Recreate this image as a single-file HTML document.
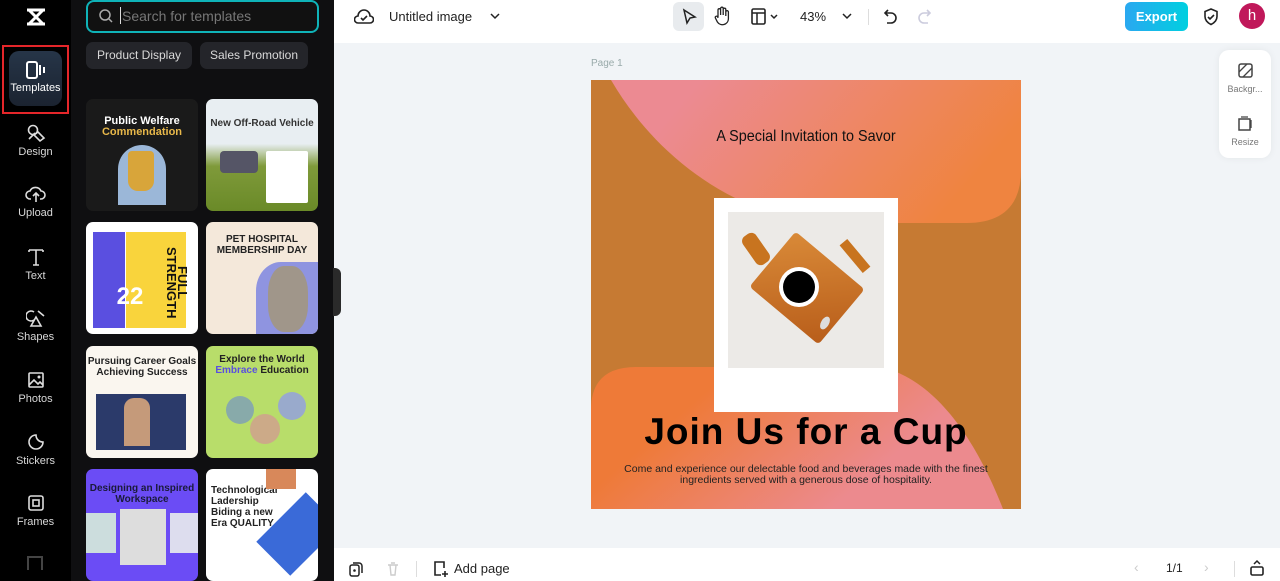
<!DOCTYPE html>
<html><head><meta charset="utf-8"><style>
*{margin:0;padding:0;box-sizing:border-box}
html,body{width:1280px;height:581px;overflow:hidden}
body{font-family:"Liberation Sans",sans-serif;background:#f1f4f7;position:relative}
.abs{position:absolute}
.rail{left:0;top:0;width:71px;height:581px;background:#000;overflow:hidden}
.ri{position:absolute;left:0;width:71px;text-align:center;color:#d8d8d8;font-size:11px}
.ri svg{display:block;margin:0 auto 3px}
.panel{left:71px;top:0;width:263px;height:581px;background:#0f0f11;overflow:hidden}
.chip{position:absolute;top:42px;height:27px;border-radius:7px;background:#24252a;color:#d9d9d9;font-size:12px;line-height:27px;text-align:center}
.th{position:absolute;width:112px;height:112px;border-radius:7px;overflow:hidden}
.th b{position:absolute;font-size:10px;text-align:center;width:100%;line-height:11px}
.top{left:334px;top:0;width:946px;height:43px;background:#fff}
.bot{left:334px;top:548px;width:946px;height:33px;background:#fff;overflow:hidden}
</style></head><body>
<div class="abs rail">
 <svg class="abs" style="left:25px;top:7px" width="22" height="20" viewBox="0 0 22 20"><path d="M2 3h18M2 17h18M4 3l14 14M18 3L4 17" stroke="#fff" stroke-width="3" fill="none"/></svg>
 <div class="abs" style="left:2px;top:45px;width:67px;height:69px;border:2px solid #e5262a"></div>
 <div class="abs" style="left:9px;top:51px;width:53px;height:55px;border-radius:10px;background:linear-gradient(#263548,#1b2330)"></div>
 <div class="ri" style="top:61px;color:#fff">
  <svg width="22" height="18" viewBox="0 0 22 18"><rect x="2" y="1" width="10" height="16" rx="2" stroke="#fff" stroke-width="2" fill="none"/><path d="M15 4v10M19 6v6" stroke="#fff" stroke-width="2"/></svg>Templates</div>
 <div class="ri" style="top:123px"><svg width="20" height="20" viewBox="0 0 20 20"><circle cx="7" cy="7" r="4.5" stroke="#ddd" stroke-width="1.6" fill="none"/><path d="M12 9l6 6-4 3-6-6zM3 16l6-6" stroke="#ddd" stroke-width="1.6" fill="none"/></svg>Design</div>
 <div class="ri" style="top:184px"><svg width="22" height="20" viewBox="0 0 22 20"><path d="M6 15H5a4 4 0 010-8 6 6 0 0111 0 4 4 0 010 8h-1M11 18V9M8 12l3-3 3 3" stroke="#ddd" stroke-width="1.6" fill="none"/></svg>Upload</div>
 <div class="ri" style="top:247px"><svg width="20" height="20" viewBox="0 0 20 20"><path d="M3 3h14M10 3v15M3 3v2M17 3v2M7 18h6" stroke="#ddd" stroke-width="1.6" fill="none"/></svg>Text</div>
 <div class="ri" style="top:308px"><svg width="20" height="20" viewBox="0 0 20 20"><path d="M8 4a5 5 0 100 8M10 9l5 9H5z M12 3l6 5" stroke="#ddd" stroke-width="1.6" fill="none"/></svg>Shapes</div>
 <div class="ri" style="top:370px"><svg width="20" height="20" viewBox="0 0 20 20"><rect x="3" y="3" width="14" height="14" rx="1" stroke="#ddd" stroke-width="1.6" fill="none"/><path d="M3 15l5-5 4 4 2-2 3 3" stroke="#ddd" stroke-width="1.6" fill="none"/><circle cx="13" cy="7" r="1.5" fill="#ddd"/></svg>Photos</div>
 <div class="ri" style="top:432px"><svg width="20" height="20" viewBox="0 0 20 20"><path d="M17 10a7 7 0 11-7-7c0 4 3 7 7 7z" stroke="#ddd" stroke-width="1.6" fill="none"/></svg>Stickers</div>
 <div class="ri" style="top:493px"><svg width="20" height="20" viewBox="0 0 20 20"><rect x="3" y="3" width="14" height="14" rx="2" stroke="#ddd" stroke-width="1.6" fill="none"/><rect x="7" y="7" width="6" height="6" stroke="#ddd" stroke-width="1.6" fill="none"/></svg>Frames</div>
 <div class="abs" style="left:27px;top:556px;width:16px;height:14px;border:2px solid #444;border-bottom:none"></div>
</div>
<div class="abs panel">
 <div class="abs" style="left:15px;top:0;width:233px;height:33px;border:2px solid #0fb3b8;border-radius:8px;background:#111"></div>
 <svg class="abs" style="left:27px;top:8px" width="16" height="16" viewBox="0 0 16 16"><circle cx="7" cy="7" r="5" stroke="#aaa" stroke-width="1.5" fill="none"/><path d="M11 11l3 3" stroke="#aaa" stroke-width="1.5"/></svg>
 <div class="abs" style="left:49px;top:7px;width:1px;height:17px;background:#ddd"></div>
 <div class="abs" style="left:51px;top:8px;color:#777;font-size:14px">Search for templates</div>
 <div class="chip" style="left:15px;width:106px">Product Display</div>
 <div class="chip" style="left:129px;width:108px">Sales Promotion</div>
 <div class="th" style="left:15px;top:99px;background:#1a1a1a"><b style="top:17px;color:#fff;font-size:11px">Public Welfare<br><span style="color:#e8b84a">Commendation</span></b><div class="abs" style="left:32px;top:46px;width:48px;height:60px;border-radius:24px 24px 0 0;background:#9bb7d8"></div><div class="abs" style="left:42px;top:52px;width:26px;height:40px;background:#d8a53a;border-radius:4px 4px 10px 10px"></div></div>
 <div class="th" style="left:135px;top:99px;background:linear-gradient(#e8eef2 40%,#7f9a3a 60%,#6a8a28)"><b style="top:19px;color:#333">New Off-Road Vehicle</b><div class="abs" style="left:60px;top:52px;width:42px;height:52px;background:#fff;border-radius:2px"></div><div class="abs" style="left:14px;top:52px;width:38px;height:22px;background:#556;border-radius:4px"></div></div>
 <div class="th" style="left:15px;top:222px;background:#fff"><div class="abs" style="left:7px;top:10px;width:32px;height:96px;background:#5a4fe0"></div><div class="abs" style="left:40px;top:10px;width:60px;height:96px;background:#f9d43c"></div><b style="top:62px;left:-12px;color:#fff;font-size:24px;line-height:26px">22</b><b style="top:10px;left:80px;color:#111;width:22px;font-size:13px;writing-mode:vertical-rl">FULL STRENGTH</b></div>
 <div class="th" style="left:135px;top:222px;background:#f4e8da"><b style="top:12px;color:#222;font-weight:bold">PET HOSPITAL<br>MEMBERSHIP DAY</b><div class="abs" style="left:50px;top:40px;width:62px;height:72px;border-radius:40% 0 0 0;background:#8f94e0"></div><div class="abs" style="left:62px;top:44px;width:40px;height:66px;background:#a0968a;border-radius:40%"></div></div>
 <div class="th" style="left:15px;top:346px;background:#faf6ef"><b style="top:10px;color:#222">Pursuing Career Goals<br>Achieving Success</b><div class="abs" style="left:10px;top:48px;width:90px;height:56px;background:#2b3a6a"></div><div class="abs" style="left:38px;top:52px;width:26px;height:48px;background:#c59a7a;border-radius:10px 10px 0 0"></div></div>
 <div class="th" style="left:135px;top:346px;background:#b8dd6a"><b style="top:8px;color:#222">Explore the World<br><span style="color:#5a4fe0">Embrace</span> Education</b><div class="abs" style="left:20px;top:50px;width:28px;height:28px;border-radius:50%;background:#8aa"></div><div class="abs" style="left:44px;top:68px;width:30px;height:30px;border-radius:50%;background:#ca8"></div><div class="abs" style="left:72px;top:46px;width:28px;height:28px;border-radius:50%;background:#9ac"></div></div>
 <div class="th" style="left:15px;top:469px;background:#6b4cf5"><b style="top:14px;color:#1a1a3a">Designing an Inspired<br>Workspace</b><div class="abs" style="left:34px;top:40px;width:46px;height:56px;background:#ddd"></div><div class="abs" style="left:0;top:44px;width:30px;height:40px;background:#cdd"></div><div class="abs" style="left:84px;top:44px;width:28px;height:40px;background:#dde"></div></div>
 <div class="th" style="left:135px;top:469px;background:#fff"><b style="top:16px;left:5px;text-align:left;color:#222;font-size:10px">Technological<br>Ladership<br>Biding a new<br>Era QUALITY</b><div class="abs" style="left:68px;top:30px;width:48px;height:70px;background:#3a6ad8;transform:rotate(45deg)"></div><div class="abs" style="left:60px;top:0;width:30px;height:20px;background:#d8885a"></div></div>
</div>
<div class="abs" style="left:333px;top:268px;width:8px;height:48px;background:#2a2a2a;border-radius:0 6px 6px 0"></div>
<div class="abs top">
 <svg class="abs" style="left:20px;top:8px" width="20" height="18" viewBox="0 0 20 18"><path d="M5 15H4a3.5 3.5 0 010-7 6 6 0 0112 0 3.5 3.5 0 010 7H5zM7 10l2 2 4-4" stroke="#222" stroke-width="1.6" fill="none"/></svg>
 <div class="abs" style="left:55px;top:9px;font-size:13px;color:#222">Untitled image</div>
 <svg class="abs" style="left:156px;top:12px" width="10" height="8"><path d="M1 2l4 4 4-4" stroke="#222" stroke-width="1.5" fill="none"/></svg>
 <div class="abs" style="left:339px;top:2px;width:31px;height:29px;background:#e8ebee;border-radius:6px"></div>
 <svg class="abs" style="left:347px;top:8px" width="16" height="18" viewBox="0 0 16 18"><path d="M3 2l11 7-5 1-3 5z" stroke="#222" stroke-width="1.5" fill="none"/></svg>
 <svg class="abs" style="left:379px;top:6px" width="18" height="20" viewBox="0 0 18 20"><path d="M5 11V4a1.3 1.3 0 012.6 0v5V2.5a1.3 1.3 0 012.6 0V9V3.5a1.3 1.3 0 012.6 0V10V6a1.3 1.3 0 012.6 0v7a6 6 0 01-11 3l-2-4a1.3 1.3 0 012.3-1.2L5 12" stroke="#222" stroke-width="1.3" fill="none"/></svg>
 <svg class="abs" style="left:417px;top:8px" width="30" height="18" viewBox="0 0 30 18"><rect x="1" y="1" width="13" height="15" rx="1.5" stroke="#222" stroke-width="1.6" fill="none"/><path d="M1 5h13M6 5v11M20 7l3 3 3-3" stroke="#222" stroke-width="1.5" fill="none"/></svg>
 <div class="abs" style="left:466px;top:9px;font-size:13px;color:#222">43%</div>
 <svg class="abs" style="left:508px;top:12px" width="10" height="8"><path d="M1 2l4 4 4-4" stroke="#222" stroke-width="1.5" fill="none"/></svg>
 <div class="abs" style="left:534px;top:9px;width:1px;height:16px;background:#ddd"></div>
 <svg class="abs" style="left:549px;top:8px" width="16" height="18" viewBox="0 0 16 18"><path d="M5 2L2 5l3 3M2 5h6a5 5 0 010 10H4" stroke="#222" stroke-width="1.6" fill="none"/></svg>
 <svg class="abs" style="left:582px;top:8px" width="16" height="18" viewBox="0 0 16 18"><path d="M11 2l3 3-3 3M14 5H8a5 5 0 000 10h4" stroke="#ccd" stroke-width="1.6" fill="none"/></svg>
 <div class="abs" style="left:791px;top:2px;width:63px;height:29px;border-radius:6px;background:linear-gradient(90deg,#2aa8f0,#00cfe0);color:#fff;font-weight:bold;font-size:13px;line-height:29px;text-align:center">Export</div>
 <svg class="abs" style="left:868px;top:7px" width="18" height="20" viewBox="0 0 18 20"><path d="M9 2l6 2.5v5c0 4-3 6.5-6 8-3-1.5-6-4-6-8v-5zM6 10l2 2 4-4" stroke="#222" stroke-width="1.6" fill="none"/></svg>
 <div class="abs" style="left:905px;top:3px;width:26px;height:26px;border-radius:50%;background:#c0185a;color:#fff;font-size:15px;line-height:25px;text-align:center">h</div>
</div>
<div class="abs" style="left:591px;top:58px;font-size:10px;color:#9aa">Page 1</div>
<div class="abs" style="left:591px;top:80px;width:430px;height:429px;background:#c67a33;overflow:hidden">
 <svg class="abs" style="left:0;top:0" width="430" height="429" viewBox="0 0 430 429">
  <defs>
   <linearGradient id="g1" x1="0" y1="0" x2="1" y2="0.3"><stop offset="0.2" stop-color="#ec8a92"/><stop offset="1" stop-color="#ef8440"/></linearGradient>
   <linearGradient id="g2" x1="0" y1="0" x2="1" y2="0.4"><stop offset="0.3" stop-color="#ee7a38"/><stop offset="0.85" stop-color="#ec8a8e"/></linearGradient>
  </defs>
  <path d="M20 0 C55 60 120 125 220 143 L375 143 Q430 143 430 90 L430 0 Z" fill="url(#g1)"/>
  <path d="M0 330 Q0 287 45 287 L290 287 C345 300 385 360 412 429 L0 429 Z" fill="url(#g2)"/>
 </svg>
 <div class="abs" style="left:0;top:48px;width:430px;text-align:center;font-family:'Liberation Sans Narrow','Liberation Sans',sans-serif;font-size:16px;color:#111;transform:scaleX(.9)">A Special Invitation to Savor</div>
 <div class="abs" style="left:123px;top:118px;width:184px;height:214px;background:#fff"></div>
 <div class="abs" style="left:137px;top:132px;width:156px;height:156px;background:#eceae7;overflow:hidden">
  <div class="abs" style="left:34px;top:40px;width:90px;height:72px;background:linear-gradient(135deg,#d98a38,#b85d1a);transform:rotate(40deg);border-radius:4px"></div>
  <div class="abs" style="left:20px;top:20px;width:16px;height:34px;background:#c8741f;transform:rotate(-35deg);border-radius:6px"></div>
  <div class="abs" style="left:51px;top:55px;width:40px;height:40px;border-radius:50%;background:#fff"></div>
  <div class="abs" style="left:55px;top:59px;width:32px;height:32px;border-radius:50%;background:#000"></div>
  <div class="abs" style="left:122px;top:26px;width:10px;height:36px;background:#c8741f;transform:rotate(-40deg)"></div>
  <div class="abs" style="left:93px;top:104px;width:8px;height:14px;border-radius:50%;background:#ddd;transform:rotate(30deg)"></div>
 </div>
 <div class="abs" style="left:0;top:331px;width:430px;text-align:center;font-weight:bold;font-size:37px;color:#000;letter-spacing:1px">Join Us for a Cup</div>
 <div class="abs" style="left:30px;top:384px;width:370px;text-align:center;font-size:10.5px;line-height:11px;color:#222">Come and experience our delectable food and beverages made with the finest ingredients served with a generous dose of hospitality.</div>
</div>
<div class="abs" style="left:1219px;top:50px;width:52px;height:108px;background:#fff;border-radius:10px;box-shadow:0 0 8px rgba(0,0,0,.06)"></div>
<svg class="abs" style="left:1238px;top:63px" width="15" height="15" viewBox="0 0 15 15"><rect x="1" y="1" width="13" height="13" rx="2" stroke="#444" stroke-width="1.5" fill="none"/><path d="M1 9l8-8M5 14l9-9" stroke="#444" stroke-width="1.3"/></svg>
<div class="abs" style="left:1219px;top:84px;width:52px;text-align:center;font-size:9px;color:#777">Backgr...</div>
<svg class="abs" style="left:1238px;top:116px" width="15" height="15" viewBox="0 0 15 15"><rect x="1" y="3" width="11" height="11" stroke="#444" stroke-width="1.5" fill="none"/><path d="M3 1h7M13 4v8" stroke="#444" stroke-width="1.3"/></svg>
<div class="abs" style="left:1219px;top:137px;width:52px;text-align:center;font-size:9px;color:#777">Resize</div>
<div class="abs bot">
 <svg class="abs" style="left:14px;top:13px" width="16" height="16" viewBox="0 0 16 16"><rect x="2" y="4" width="9" height="11" rx="2" stroke="#222" stroke-width="1.5" fill="none"/><path d="M5 2h6a3 3 0 013 3v7" stroke="#222" stroke-width="1.5" fill="none"/><circle cx="6.5" cy="9.5" r="1.3" fill="#222"/></svg>
 <svg class="abs" style="left:52px;top:13px" width="14" height="16" viewBox="0 0 14 16"><path d="M2 4h10M4 4l1 10h4l1-10M5 2h4" stroke="#ccc" stroke-width="1.4" fill="none"/></svg>
 <div class="abs" style="left:82px;top:13px;width:1px;height:16px;background:#ddd"></div>
 <svg class="abs" style="left:98px;top:12px" width="18" height="18" viewBox="0 0 18 18"><path d="M9 15H3V2h9v6M13 11v6M10 14h6" stroke="#222" stroke-width="1.6" fill="none"/></svg>
 <div class="abs" style="left:120px;top:13px;font-size:13px;color:#222">Add page</div>
 <div class="abs" style="left:800px;top:11px;font-size:14px;color:#ccc">&lsaquo;</div>
 <div class="abs" style="left:832px;top:13px;font-size:12px;color:#222">1/1</div>
 <div class="abs" style="left:870px;top:11px;font-size:14px;color:#ccc">&rsaquo;</div>
 <div class="abs" style="left:900px;top:13px;width:1px;height:16px;background:#ddd"></div>
 <svg class="abs" style="left:915px;top:11px" width="16" height="18" viewBox="0 0 16 18"><rect x="2" y="8" width="12" height="8" rx="1.5" stroke="#222" stroke-width="1.6" fill="none"/><path d="M5 5l3-3 3 3" stroke="#222" stroke-width="1.5" fill="none"/></svg>
</div>
</body></html>
